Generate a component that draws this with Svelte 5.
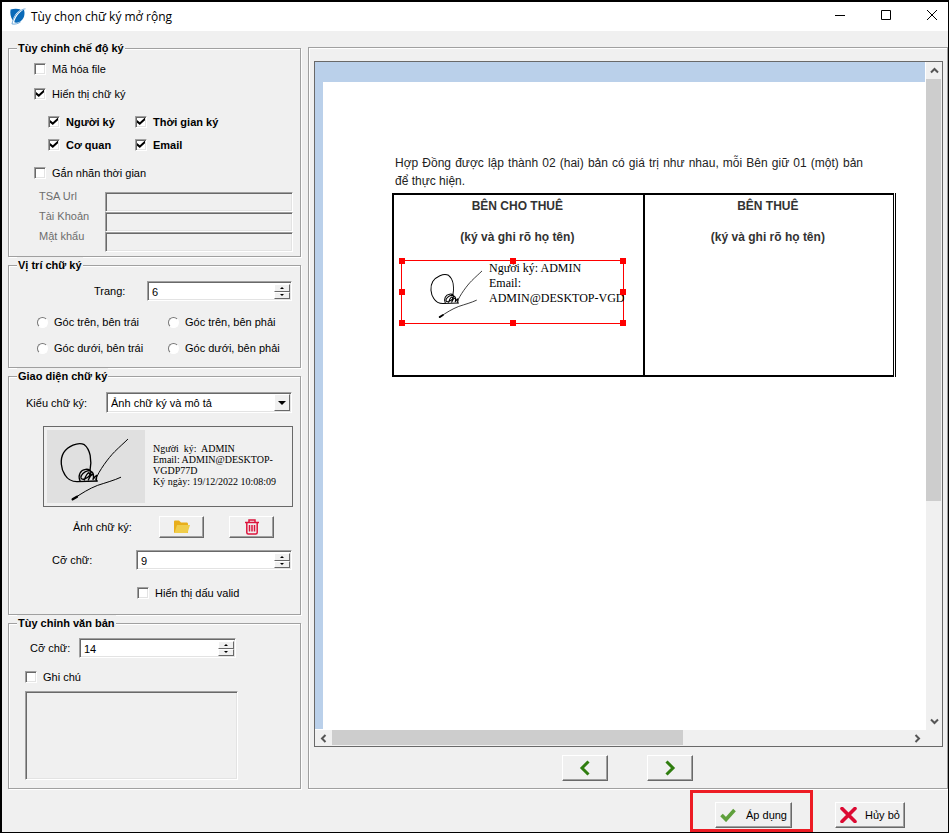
<script>
  let hashFile = $state(false);
  let showSignature = $state(true);
  let showSigner = $state(true);
  let showTime = $state(true);
  let showOrg = $state(true);
  let showEmail = $state(true);
  let timestamp = $state(false);
  let showValid = $state(false);
  let note = $state(false);
  let pageNumber = $state(6);
  let signatureSize = $state(9);
  let textSize = $state(14);
  let corner = $state('');
  let style = $state('both');

  const corners = [
    ['tl', 'Góc trên, bên trái'],
    ['tr', 'Góc trên, bên phải'],
    ['bl', 'Góc dưới, bên trái'],
    ['br', 'Góc dưới, bên phải']
  ];
  const handles = ['nw', 'n', 'ne', 'w', 'e', 'sw', 's', 'se'];
</script>

{#snippet signature()}
  <svg class="scrawl" viewBox="0 0 294 219" aria-hidden="true">
    <g fill="none" stroke="#000" stroke-width="4" stroke-linecap="round" stroke-linejoin="round">
      <path d="M129 122C135 90 130 58 112 44C92 34 62 50 50 68C38 88 42 118 54 135C62 148 74 155 90 155L151 153" />
      <path d="M146 148C156 122 184 84 203 65C218 50 232 38 242 28" stroke-width="3" />
      <path d="M77 208C104 190 126 176 152 166C176 158 202 151 221 142" stroke-width="3" />
      <path d="M99 152C92 136 100 120 116 118C130 116 136 126 128 136C120 146 106 152 102 144C100 136 112 124 124 122C134 122 142 130 140 142M112 150C116 138 120 130 126 128C130 134 128 144 124 150C128 140 132 134 138 132C140 138 140 144 138 148C142 142 146 138 149 136L148 152" stroke-width="4" />
      <path d="M77 208L90 200" stroke-width="7" />
    </g>
  </svg>
{/snippet}

<div class="window">
  <header class="titlebar">
    <svg class="logo" viewBox="0 0 16 16" aria-hidden="true">
      <path d="M1.500 1.500C5 .5 8 .6 11 1.500C7 4 4.500 7.500 3.500 11.500C1.500 8.500 .8 5 1.500 1.500Z" fill="#0a6ab8" />
      <path d="M14 1.500C15.500 6 14 10.500 10.500 12.800C8.500 14 6 14.200 5 13.500C5.500 9.500 9 4.500 14 1.500Z" fill="#0a6ab8" />
      <path d="M15.500 .8C10 1 4 8 2.800 15C5 15.600 9 14.800 11 13" fill="none" stroke="#4a93cf" stroke-width=".7" />
    </svg>
    <h1>Tùy chọn chữ ký mở rộng</h1>
    <div class="controls">
      <button type="button" aria-label="Thu nhỏ"><svg viewBox="0 0 12 12"><path d="M1 6.500H11" /></svg></button>
      <button type="button" aria-label="Phóng to"><svg viewBox="0 0 12 12"><path d="M1.500 1.500H10.500V10.500H1.500Z" /></svg></button>
      <button type="button" aria-label="Đóng"><svg viewBox="0 0 12 12"><path d="M1 1L11 11M11 1L1 11" /></svg></button>
    </div>
  </header>

  <main>
    <form class="options" onsubmit={(e) => e.preventDefault()}>
      <fieldset class="mode">
        <legend>Tùy chỉnh chế độ ký</legend>
        <label class="tick"><input type="checkbox" bind:checked={hashFile} />Mã hóa file</label>
        <label class="tick"><input type="checkbox" bind:checked={showSignature} />Hiển thị chữ ký</label>
        <div class="fields">
          <label class="tick"><input type="checkbox" bind:checked={showSigner} />Người ký</label>
          <label class="tick"><input type="checkbox" bind:checked={showTime} />Thời gian ký</label>
          <label class="tick"><input type="checkbox" bind:checked={showOrg} />Cơ quan</label>
          <label class="tick"><input type="checkbox" bind:checked={showEmail} />Email</label>
        </div>
        <label class="tick"><input type="checkbox" bind:checked={timestamp} />Gắn nhãn thời gian</label>
        <div class="tsa">
          <label for="tsa-url">TSA Url</label><input id="tsa-url" class="sunken" type="text" disabled={!timestamp} />
          <label for="tsa-user">Tài Khoản</label><input id="tsa-user" class="sunken" type="text" disabled={!timestamp} />
          <label for="tsa-pass">Mật khẩu</label><input id="tsa-pass" class="sunken" type="password" disabled={!timestamp} />
        </div>
      </fieldset>

      <fieldset class="place">
        <legend>Vị trí chữ ký</legend>
        <div class="row page-row">
          <label for="page">Trang:</label>
          <div class="spin">
            <input id="page" type="number" bind:value={pageNumber} />
            <button type="button" aria-label="Tăng trang" onclick={() => pageNumber++}><i class="up"></i></button>
            <button type="button" aria-label="Giảm trang" onclick={() => pageNumber--}><i class="down"></i></button>
          </div>
        </div>
        <div class="corners">
          {#each corners as [value, text]}
            <label><input type="radio" name="corner" {value} bind:group={corner} />{text}</label>
          {/each}
        </div>
      </fieldset>

      <fieldset class="look">
        <legend>Giao diện chữ ký</legend>
        <div class="row style-row">
          <label for="style">Kiểu chữ ký:</label>
          <div class="combo">
            <select id="style" bind:value={style}>
              <option value="both">Ảnh chữ ký và mô tả</option>
              <option value="image">Ảnh chữ ký</option>
              <option value="text">Mô tả</option>
            </select>
            <span class="drop"><i class="down"></i></span>
          </div>
        </div>
        <div class="preview">
          <div class="picture">{@render signature()}</div>
          <p>Người&nbsp; ký:&nbsp; ADMIN<br />Email: ADMIN@DESKTOP-<br />VGDP77D<br />Ký ngày: 19/12/2022 10:08:09</p>
        </div>
        <div class="row image-row">
          <span>Ảnh chữ ký:</span>
          <button type="button" class="raised" aria-label="Chọn ảnh">
            <svg width="18" height="14" viewBox="0 0 18 14"><path d="M1 1.500Q1 .5 2 .5H6L8 2.500H14Q15 2.500 15 4V13H2Q1 13 1 12Z" fill="#e8ae1b" /><path d="M4 5H17L14.500 13H1.500Z" fill="#f0cd4b" /></svg>
          </button>
          <button type="button" class="raised" aria-label="Xóa ảnh">
            <svg width="16" height="16" viewBox="0 0 16 16" fill="none" stroke="#dc143c" stroke-width="1.500"><path d="M1 3.500H15M5 3V1H11V3M2.800 4V13.500Q2.800 15 4.300 15H11.700Q13.200 15 13.200 13.500V4M5.500 6V12.500M8 6V12.500M10.500 6V12.500" /></svg>
          </button>
        </div>
        <div class="row size-row">
          <label for="sig-size">Cỡ chữ:</label>
          <div class="spin">
            <input id="sig-size" type="number" bind:value={signatureSize} />
            <button type="button" aria-label="Tăng cỡ chữ" onclick={() => signatureSize++}><i class="up"></i></button>
            <button type="button" aria-label="Giảm cỡ chữ" onclick={() => signatureSize--}><i class="down"></i></button>
          </div>
        </div>
        <label class="tick valid"><input type="checkbox" bind:checked={showValid} />Hiển thị dấu valid</label>
      </fieldset>

      <fieldset class="text">
        <legend>Tùy chỉnh văn bản</legend>
        <div class="row text-row">
          <label for="text-size">Cỡ chữ:</label>
          <div class="spin">
            <input id="text-size" type="number" bind:value={textSize} />
            <button type="button" aria-label="Tăng cỡ văn bản" onclick={() => textSize++}><i class="up"></i></button>
            <button type="button" aria-label="Giảm cỡ văn bản" onclick={() => textSize--}><i class="down"></i></button>
          </div>
        </div>
        <label class="tick note"><input type="checkbox" bind:checked={note} />Ghi chú</label>
        <textarea class="sunken" aria-label="Ghi chú" disabled={!note}></textarea>
      </fieldset>
    </form>

    <section class="viewer-group">
      <div class="viewer">
        <div class="canvas">
          <article class="sheet">
            <p>Hợp Đồng được lập thành 02 (hai) bản có giá trị như nhau, mỗi Bên giữ 01 (một) bản để thực hiện.</p>
            <table>
              <tbody>
                <tr>
                  <td><strong>BÊN CHO THUÊ</strong><strong>(ký và ghi rõ họ tên)</strong></td>
                  <td><strong>BÊN THUÊ</strong><strong>(ký và ghi rõ họ tên)</strong></td>
                </tr>
              </tbody>
            </table>
            <div class="stamp">
              <div class="stamp-body">
                {@render signature()}
                <div>Người ký: ADMIN<br />Email:<br />ADMIN@DESKTOP-VGD</div>
              </div>
              {#each handles as h}<span class="handle {h}"></span>{/each}
            </div>
          </article>
        </div>
        <div class="bar vertical">
          <button type="button" aria-label="Cuộn lên"><svg viewBox="0 0 9 9"><path d="M1 6.500L4.500 3L8 6.500" /></svg></button>
          <span class="thumb"></span>
          <button type="button" aria-label="Cuộn xuống"><svg viewBox="0 0 9 9"><path d="M1 2.500L4.500 6L8 2.500" /></svg></button>
        </div>
        <div class="bar horizontal">
          <button type="button" aria-label="Cuộn trái"><svg viewBox="0 0 9 9"><path d="M6.500 1L3 4.500L6.500 8" /></svg></button>
          <span class="thumb"></span>
          <button type="button" aria-label="Cuộn phải"><svg viewBox="0 0 9 9"><path d="M2.500 1L6 4.500L2.500 8" /></svg></button>
        </div>
      </div>
      <nav>
        <button type="button" class="raised" aria-label="Trang trước"><svg width="12" height="16" viewBox="0 0 12 16"><path d="M9.500 1.500L3 8L9.500 14.500" /></svg></button>
        <button type="button" class="raised" aria-label="Trang sau"><svg width="12" height="16" viewBox="0 0 12 16"><path d="M2.500 1.500L9 8L2.500 14.500" /></svg></button>
      </nav>
    </section>
  </main>

  <footer>
    <div class="highlight">
      <button type="button" class="raised apply">
        <svg width="16" height="14" viewBox="0 0 16 14"><path d="M1.500 7L6 11.500L14.500 2" fill="none" stroke="#5fa03c" stroke-width="3.600" /></svg>
        Áp dụng
      </button>
    </div>
    <button type="button" class="raised cancel">
      <svg width="17" height="16" viewBox="0 0 17 16"><path d="M2 1.500L15 14.500M15 1.500L2 14.500" fill="none" stroke="#dc0a32" stroke-width="3.600" stroke-linecap="round" /></svg>
      Hủy bỏ
    </button>
  </footer>
</div>

<style>
  :global(body) { margin: 0; background: #f0f0f0; }
  * { box-sizing: border-box; }
  .window {
    min-height: 100vh;
    display: flex;
    flex-direction: column;
    border: 1px solid #000;
    border-width: 2px 1px 1px 2px;
    background: #f0f0f0;
    color: #000;
    font: 11px/16px "Liberation Sans", Arial, sans-serif;
  }
  button, input, select, textarea { font: inherit; color: inherit; margin: 0; padding: 0; border: 0; border-radius: 0; }
  input, textarea, select { outline: 0; }
  h1, p { margin: 0; }
  svg { display: block; flex: none; }

  .titlebar { display: flex; align-items: center; height: 29px; padding-left: 7px; background: #fff; }
  .logo { width: 17px; height: 17px; margin-right: 5px; }
  h1 { flex: 1; font: 12px/16px "Open Sans", sans-serif; }
  .controls { display: flex; gap: 14px; }
  .controls button { width: 32px; height: 29px; display: grid; place-items: center; padding-bottom: 3px; background: none; }
  .controls svg { width: 12px; height: 12px; fill: none; stroke: #000; stroke-width: 1; }

  main { flex: 1; display: grid; grid-template-columns: 293px 1fr; gap: 7px; padding: 9px 0 0 6px; }
  .options { display: flex; flex-direction: column; }
  fieldset {
    min-width: 0;
    margin: 0;
    padding: 0;
    border: 1px solid #a0a0a0;
    box-shadow: 1px 1px 0 #fff, inset 1px 1px 0 #fff;
  }
  fieldset.text { flex: 1; }
  legend { margin-left: 8px; padding: 0 1px; height: 16px; background: #f0f0f0; font-weight: bold; }

  .tick { display: flex; align-items: center; gap: 6px; height: 25px; padding-left: 25px; }
  input[type="checkbox"] {
    appearance: none;
    width: 12px;
    height: 12px;
    background: #fff;
    border: 1px solid;
    border-color: #a0a0a0 #fff #fff #a0a0a0;
    box-shadow: inset 1px 1px 0 #696969, inset -1px -1px 0 #e3e3e3;
  }
  input[type="checkbox"]:checked::after {
    content: "";
    display: block;
    width: 8px;
    height: 8px;
    margin: 1px;
    background: #000;
    clip-path: polygon(0 30%, 35% 60%, 100% 0, 100% 35%, 35% 95%, 0 65%);
  }
  .fields { display: grid; grid-template-columns: 87px 1fr; margin: 4px 0; padding-left: 39px; font-weight: bold; }
  .fields .tick { height: 23px; padding: 0; }
  .sunken {
    border: 1px solid;
    border-color: #a0a0a0 #fff #fff #a0a0a0;
    box-shadow: inset 1px 1px 0 #696969, inset -1px -1px 0 #e3e3e3;
    background: #f0f0f0;
  }
  .tsa { display: grid; grid-template-columns: 66px 188px; grid-auto-rows: 20px; margin-top: 7px; padding: 0 0 0 30px; color: #6d6d6d; }
  .tsa label { height: 8px; line-height: 8px; }
  .mode { padding-bottom: 4px; }

  .row { display: flex; align-items: center; }
  .spin {
    display: grid;
    grid-template: 1fr 1fr / 1fr 16px;
    height: 20px;
    padding: 2px 1px 1px 2px;
    border: 1px solid;
    border-color: #a0a0a0 #fff #fff #a0a0a0;
    box-shadow: inset 1px 1px 0 #696969, inset -1px -1px 0 #e3e3e3;
    background: #fff;
  }
  .spin input { grid-row: 1 / 3; min-width: 0; padding-left: 2px; appearance: textfield; background: none; }
  .spin input::-webkit-inner-spin-button { appearance: none; }
  .spin button, .drop {
    display: grid;
    place-items: center;
    background: #f0f0f0;
    border: 1px solid;
    border-color: #fff #696969 #696969 #fff;
  }
  .up, .down { border: 2px solid transparent; }
  .up { border-bottom-color: #000; border-top: 0; }
  .down { border-top-color: #000; border-bottom: 0; }
  .page-row { padding: 8px 8px 0 85px; }
  .page-row label { width: 53px; }
  .page-row .spin, .size-row .spin { flex: 1; }
  .corners { display: grid; grid-template-columns: 131px 1fr; grid-auto-rows: 26px; padding: 8px 0 6px 28px; }
  .corners label { display: flex; align-items: center; gap: 6px; }
  input[type="radio"] {
    appearance: none;
    width: 11px;
    height: 11px;
    border: 1px solid;
    border-color: #777 #fff #fff #777;
    border-radius: 50%;
    background: #fff;
  }
  input[type="radio"]:checked { background: radial-gradient(#000 2px, #fff 3px); }

  .style-row { padding: 8px 8px 0 17px; }
  .style-row label { width: 80px; }
  .combo { position: relative; flex: 1; }
  select {
    appearance: none;
    display: block;
    width: 100%;
    height: 21px;
    padding-left: 4px;
    background: #fff;
    border: 1px solid;
    border-color: #a0a0a0 #fff #fff #a0a0a0;
    box-shadow: inset 1px 1px 0 #696969, inset -1px -1px 0 #e3e3e3;
  }
  .drop { position: absolute; top: 2px; right: 2px; bottom: 2px; width: 16px; pointer-events: none; }
  .drop .down { border-width: 4px 4px 0; }
  .preview {
    display: flex;
    align-items: center;
    gap: 8px;
    height: 81px;
    margin: 13px 7px 0 34px;
    padding: 3px;
    border: 1px solid #696969;
  }
  .picture { flex: none; width: 98px; background: #e0e0e0; }
  .preview .scrawl { width: 98px; height: 73px; }
  .preview p { padding-bottom: 4px; font: 10px/11px "Liberation Serif", "Times New Roman", serif; white-space: nowrap; }
  .raised {
    display: flex;
    align-items: center;
    justify-content: center;
    background: #f0f0f0;
    border: 1px solid;
    border-color: #fff #696969 #696969 #fff;
    box-shadow: inset -1px -1px 0 #a0a0a0;
  }
  .image-row { margin-top: 9px; padding-left: 64px; }
  .image-row span { width: 86px; }
  .image-row .raised { width: 45px; height: 22px; margin-right: 25px; }
  .size-row { margin-top: 12px; padding: 0 8px 0 43px; }
  .size-row label { width: 84px; }
  .valid { margin: 10px 0 9px; padding-left: 128px; }

  .text-row { padding: 7px 0 0 21px; }
  .text-row label { width: 49px; }
  .text-row .spin { width: 157px; }
  .note { margin-top: 6px; padding-left: 16px; }
  textarea { display: block; width: 213px; height: 89px; margin: 2px 0 0 16px; resize: none; }

  .viewer-group {
    display: flex;
    flex-direction: column;
    min-width: 0;
    margin-top: 7px;
    padding: 13px 4px 0 5px;
    border: 1px solid #a0a0a0;
    box-shadow: inset 1px 1px 0 #fff, 0 1px 0 #fff;
  }
  .viewer { flex: 1; display: grid; grid-template: 1fr 16px / 1fr 16px; border: 1px solid #696969; }
  .canvas { min-width: 0; overflow: hidden; display: flex; padding: 20px 0 0 8px; background: #bad0ea; border-right: 1px solid #fff; border-bottom: 1px solid #fff; }
  .sheet { position: relative; flex: 1; padding: 72px 29px 72px 72px; background: #fff; font-size: 12px; }
  .sheet p { width: 468px; line-height: 18px; text-align: justify; color: #222; }
  table { width: 504px; margin: 3px 0 0 -3px; border-collapse: collapse; border: 2px solid #000; border-right: 3px double #000; }
  td { width: 50%; height: 182px; padding: 2px 2px 2px 0; border: 2px solid #000; border-right: inherit; vertical-align: top; text-align: center; color: #333; }
  td:first-child { border-right: 2px solid #000; }
  td strong { display: block; margin-bottom: 13px; line-height: 18px; }
  .stamp { position: absolute; left: 78px; top: 178px; width: 223px; height: 64px; border: 1px solid #f00; }
  .stamp-body { display: flex; gap: 12px; height: 62px; padding-left: 18px; }
  .stamp-body div { font: 12px/15px "Liberation Serif", "Times New Roman", serif; white-space: nowrap; }
  .stamp .scrawl { width: 75px; height: 56px; margin-top: 3px; margin-right: -18px; }
  .handle { position: absolute; width: 6px; height: 6px; margin: -3px; background: #f00; }
  .nw, .n, .ne { top: 0; }
  .w, .e { top: 50%; }
  .sw, .s, .se { top: 100%; }
  .nw, .w, .sw { left: 0; }
  .n, .s { left: 50%; }
  .ne, .e, .se { left: 100%; }

  .bar { display: flex; background: #f0f0f0; }
  .bar button { flex: none; display: grid; place-items: center; width: 17px; height: 16px; background: none; }
  .bar svg { width: 9px; height: 9px; fill: none; stroke: #555; stroke-width: 2; }
  .thumb { background: #cdcdcd; }
  .vertical { flex-direction: column; justify-content: space-between; }
  .vertical button { width: 16px; height: 17px; }
  .vertical .thumb { flex: 0 0 422px; width: 15px; margin-bottom: auto; }
  .horizontal .thumb { flex: 0 0 351px; height: 15px; margin-right: auto; }
  nav { display: flex; justify-content: center; gap: 39px; padding: 8px 2px 7px 0; }
  nav .raised { width: 46px; height: 26px; }
  nav path { fill: none; stroke: #2f7d0f; stroke-width: 3; }

  footer { display: flex; justify-content: flex-end; align-items: flex-start; gap: 22px; padding: 1px 43px 0 0; }
  .highlight { padding: 9px 18px 1px 22px; border: 3px solid #ed1c24; }
  .highlight, .cancel { flex: none; }
  footer .raised { height: 26px; }
  .apply { width: 77px; gap: 10px; }
  .cancel { width: 70px; gap: 8px; margin-top: 12px; }
</style>
